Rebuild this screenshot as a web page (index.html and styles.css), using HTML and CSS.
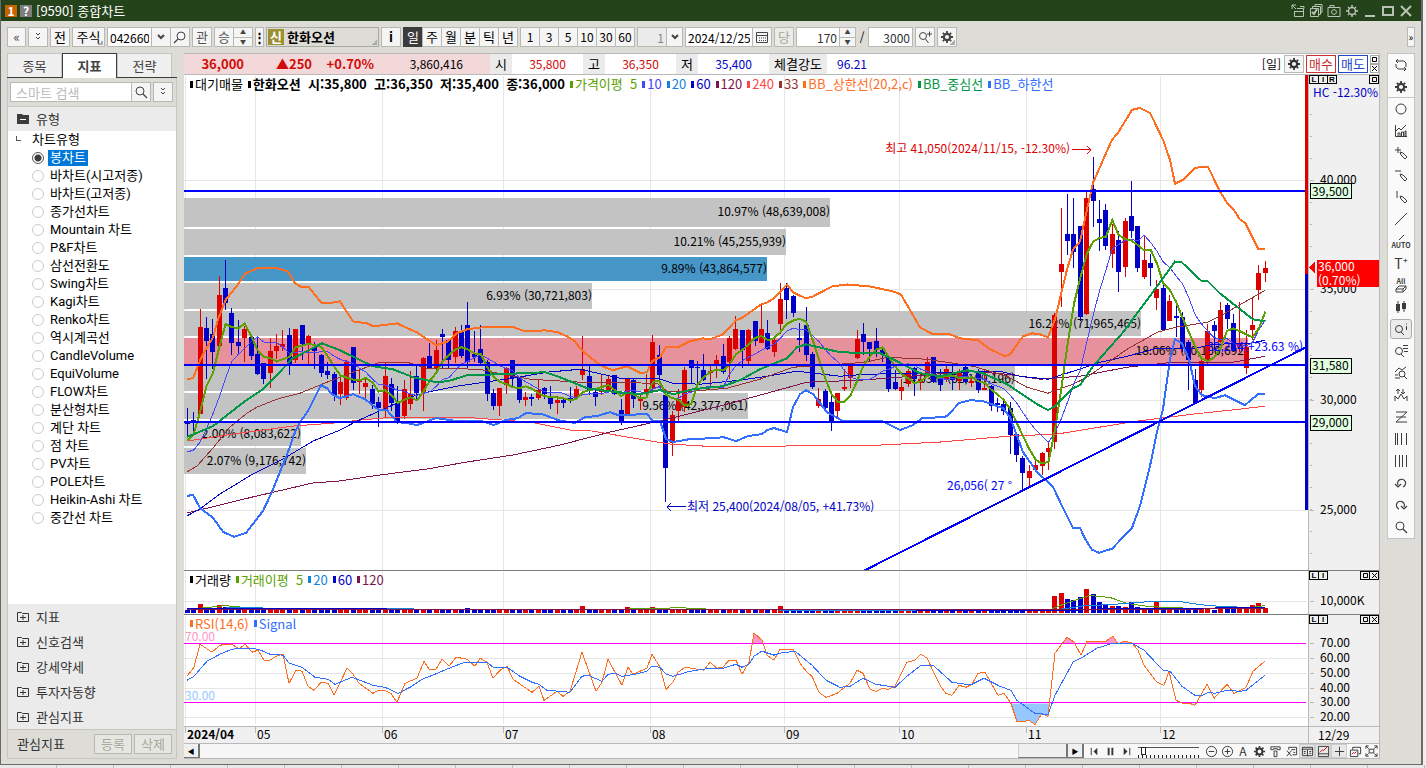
FILE: index.html
```html
<!DOCTYPE html>
<html lang="ko">
<head>
    <meta charset="UTF-8">
    <title>[9590] 종합차트</title>
    <link rel="stylesheet" href="styles.css">
</head>
<body>
<svg class="sprite">
    <symbol id="gear" viewBox="0 0 14 14"><circle cx="7" cy="7" r="3.2" fill="none" stroke="currentColor" stroke-width="2.2"/><path d="M7 1v2M7 11v2M1 7h2M11 7h2M2.8 2.8l1.4 1.4M9.8 9.8l1.4 1.4M11.2 2.8L9.8 4.2M4.2 9.8l-1.4 1.4" stroke="currentColor" stroke-width="1.8"/></symbol>
    <symbol id="find" viewBox="0 0 14 14"><circle cx="6" cy="6" r="4" fill="none" stroke="currentColor"/><path d="M9 9l4 4" stroke="currentColor" stroke-width="1.3"/></symbol>
    <symbol id="down" viewBox="0 0 14 14"><path d="M4 5l3 3 3-3" fill="none" stroke="currentColor" stroke-width="2"/></symbol>
    <symbol id="dbl" viewBox="0 0 14 14"><path d="M5 3l2 2 2-2M5 7l2 2 2-2" fill="none" stroke="currentColor"/></symbol>
    <symbol id="pen" viewBox="0 0 14 14"><path d="M6 6l1 3 4 4 2-2-4-4z" fill="none" stroke="currentColor"/></symbol>
    <symbol id="folder" viewBox="0 0 12 12"><path d="M.5 10.500v-9h4l1 1h6v8z" fill="none" stroke="currentColor"/><path d="M3 6.500h6M6 4v5" stroke="currentColor"/></symbol>
    <symbol id="max" viewBox="0 0 7 7"><path d="M1.500 1.500h4v4h-4z" fill="none" stroke="currentColor"/></symbol>
    <symbol id="close" viewBox="0 0 7 7"><path d="M1 1l5 5M6 1L1 6" stroke="currentColor"/></symbol>
</svg>
<div class="window">
    <header class="titlebar">
        <span class="badge num">1</span><span class="badge help">?</span>
        <h1>[9590] 종합차트</h1>
        <div class="win-buttons">
            <button aria-label="분리"><svg viewBox="0 0 14 14"><path d="M1 5V1h4M1 1l4 4M3.500 7v5.500h9v-8H6M4 7.500h9M9 2.500h4v2" fill="none" stroke="currentColor"/></svg></button>
            <button aria-label="선택"><svg viewBox="0 0 14 14"><path d="M1.500 4.500h8v8h-8zM3.500 4V2.500h8v8H10M6 2V.500h7v8h-1" fill="none" stroke="currentColor"/><path d="M3 8l2 2 3-5" fill="none" stroke="currentColor" stroke-width="2"/></svg></button>
            <button aria-label="캡처"><svg viewBox="0 0 14 14"><path d="M1 3.500h12v9H1zM3 3V1.500h4V3" fill="none" stroke="currentColor"/><circle cx="7" cy="8" r="2.400" fill="none" stroke="currentColor"/></svg></button>
            <button aria-label="설정"><svg viewBox="0 0 14 14"><circle cx="7" cy="7" r="3.500" fill="none" stroke="currentColor" stroke-width="1.400"/><path d="M7 1v2M7 11v2M1 7h2M11 7h2M3 3l1 1M10 10l1 1M11 3l-1 1M4 10l-1 1" stroke="currentColor" stroke-width="1.600"/></svg></button>
            <button aria-label="최소화"><svg viewBox="0 0 14 14"><path d="M2 12h10" stroke="currentColor" stroke-width="2"/></svg></button>
            <button aria-label="최대화"><svg viewBox="0 0 14 14"><path d="M2 3h10v8H2z" fill="none" stroke="currentColor" stroke-width="2"/></svg></button>
            <button aria-label="닫기"><svg viewBox="0 0 14 14"><path d="M2 2l10 10M12 2L2 12" stroke="currentColor" stroke-width="2"/></svg></button>
        </div>
    </header>

    <div class="toolbar">
        <button class="btn first">«</button>
        <button class="btn"><svg><use href="#dbl"/></svg></button>
        <button class="btn">전</button>
        <button class="btn kind">주식</button>
        <div class="group"><input class="code" aria-label="종목코드" value="042660"><button class="btn" aria-label="목록"><svg><use href="#down"/></svg></button><button class="btn" aria-label="종목검색"><svg class="flip"><use href="#find"/></svg></button></div>
        <button class="btn dim">관</button>
        <div class="group"><button class="btn dim">승</button><span class="spin"><button aria-label="위">▲</button><button aria-label="아래">▼</button></span></div>
        <button class="btn more">⋮</button>
        <div class="stock"><b class="sin">신</b><b>한화오션</b></div>
        <button class="btn"><b>i</b></button>
        <div class="group"><button class="btn on">일</button><button class="btn">주</button><button class="btn">월</button><button class="btn">분</button><button class="btn">틱</button><button class="btn">년</button></div>
        <div class="group nums"><button class="btn">1</button><button class="btn">3</button><button class="btn">5</button><button class="btn">10</button><button class="btn">30</button><button class="btn">60</button></div>
        <div class="group"><input class="unit" aria-label="주기" value="1" disabled><button class="btn chev" aria-label="주기 목록"><svg><use href="#down"/></svg></button></div>
        <div class="group"><input class="date" aria-label="기준일" value="2024/12/25"><button class="btn" aria-label="달력"><svg viewBox="0 0 14 14"><path d="M1.500 2.500h11v10h-11zM1 5.500h12" fill="none" stroke="currentColor"/><path d="M4 8h7M4 10.500h7" stroke="currentColor" stroke-dasharray="1 1"/></svg></button></div>
        <button class="btn off" disabled>당</button>
        <div class="group"><input class="bars" aria-label="봉 개수" value="170"><span class="spin"><button aria-label="증가">▲</button><button aria-label="감소">▼</button></span></div>
        <span class="slash">/</span>
        <input class="total" aria-label="전체 봉" value="3000">
        <button class="btn" aria-label="확대"><svg viewBox="0 0 14 14"><circle cx="5" cy="6" r="3.500" fill="none" stroke="currentColor"/><path d="M7.500 9l3 4M9 4h5M11.500 1.500v5" stroke="currentColor"/></svg></button>
        <button class="btn kind2" aria-label="차트 설정"><svg><use href="#gear"/></svg></button>
        <button class="btn tail">»</button>
    </div>

    <div class="body">
        <aside class="side">
            <nav class="tabs"><button>종목</button><button class="active">지표</button><button>전략</button></nav>
            <form class="search"><input type="text" aria-label="스마트 검색" placeholder="스마트 검색"><button class="btn" type="button" aria-label="검색"><svg><use href="#find"/></svg></button><button class="btn gap" type="button" aria-label="펼치기"><svg><use href="#dbl"/></svg></button></form>
            <h2><svg viewBox="0 0 12 12"><path d="M0 11V1h5l1 1h6v9z" fill="#3c3c3c"/><path d="M3 6.500h6" stroke="#fff"/></svg>유형</h2>
            <div class="tree">
                <p><i></i>차트유형</p>
                <label><input type="radio" name="kind" checked><span>봉차트</span></label>
                <label><input type="radio" name="kind"><span>바차트(시고저종)</span></label>
                <label><input type="radio" name="kind"><span>바차트(고저종)</span></label>
                <label><input type="radio" name="kind"><span>종가선차트</span></label>
                <label><input type="radio" name="kind"><span>Mountain 차트</span></label>
                <label><input type="radio" name="kind"><span>P&amp;F차트</span></label>
                <label><input type="radio" name="kind"><span>삼선전환도</span></label>
                <label><input type="radio" name="kind"><span>Swing차트</span></label>
                <label><input type="radio" name="kind"><span>Kagi차트</span></label>
                <label><input type="radio" name="kind"><span>Renko차트</span></label>
                <label><input type="radio" name="kind"><span>역시계곡선</span></label>
                <label><input type="radio" name="kind"><span>CandleVolume</span></label>
                <label><input type="radio" name="kind"><span>EquiVolume</span></label>
                <label><input type="radio" name="kind"><span>FLOW차트</span></label>
                <label><input type="radio" name="kind"><span>분산형차트</span></label>
                <label><input type="radio" name="kind"><span>계단 차트</span></label>
                <label><input type="radio" name="kind"><span>점 차트</span></label>
                <label><input type="radio" name="kind"><span>PV차트</span></label>
                <label><input type="radio" name="kind"><span>POLE차트</span></label>
                <label><input type="radio" name="kind"><span>Heikin-Ashi 차트</span></label>
                <label><input type="radio" name="kind"><span>중간선 차트</span></label>
            </div>
            <div class="folders">
                <button><svg><use href="#folder"/></svg>지표</button>
                <button><svg><use href="#folder"/></svg>신호검색</button>
                <button><svg><use href="#folder"/></svg>강세약세</button>
                <button><svg><use href="#folder"/></svg>투자자동향</button>
                <button><svg><use href="#folder"/></svg>관심지표</button>
            </div>
            <div class="side-foot"><span>관심지표</span><button disabled>등록</button><button disabled>삭제</button></div>
        </aside>

        <main class="chart">
            <div class="quote">
                <div class="now"><b class="price">36,000</b><b class="diff">▲250</b><b class="rate">+0.70%</b><span class="vol">3,860,416</span></div>
                <span class="lab">시</span><span class="val up">35,800</span>
                <span class="lab">고</span><span class="val up">36,350</span>
                <span class="lab">저</span><span class="val dn">35,400</span>
                <span class="lab wide">체결강도</span><span class="val dn power">96.21</span>
                <span class="period">[일]</span>
                <button class="set" aria-label="설정"><svg><use href="#gear"/></svg></button>
                <button class="buy">매수</button>
                <button class="sell">매도</button>
                <span class="mini"><button aria-label="확대"><svg><use href="#max"/></svg></button><button aria-label="닫기"><svg><use href="#close"/></svg></button></span>
            </div>
            <section class="pane pane-price">
                <div class="plot">
                    <svg id="price"></svg>
                    <div class="legend">
                        <span class="k">대기매물</span>
                        <b class="k">한화오션&nbsp; 시:35,800&nbsp; 고:36,350&nbsp; 저:35,400&nbsp; 종:36,000</b>
                        <span class="ma5">가격이평&nbsp; 5</span><span class="ma10">10</span><span class="ma20">20</span><span class="ma60">60</span><span class="ma120">120</span><span class="ma240">240</span><span class="ma33">33</span>
                        <span class="bbu">BB_상한선(20,2,c)</span><span class="bbm">BB_중심선</span><span class="bbl">BB_하한선</span>
                    </div>
                </div>
                <div class="axis"><svg id="priceAxis"></svg><div class="lir"><button>L</button><button>I</button><button>R</button></div><div class="box"><button aria-label="확대"><svg><use href="#max"/></svg></button></div></div>
            </section>
            <section class="pane pane-volume">
                <div class="plot">
                    <svg id="volume"></svg>
                    <div class="legend"><span class="k">거래량</span><span class="ma5">거래이평&nbsp; 5</span><span class="ma20">20</span><span class="ma60">60</span><span class="ma120">120</span></div>
                </div>
                <div class="axis"><svg id="volumeAxis"></svg><div class="lir"><button>L</button><button>I</button></div><div class="box"><button aria-label="확대"><svg><use href="#max"/></svg></button><button aria-label="닫기"><svg><use href="#close"/></svg></button></div></div>
            </section>
            <section class="pane pane-rsi">
                <div class="plot">
                    <svg id="rsi"></svg>
                    <div class="legend"><span class="bbu">RSI(14,6)</span><span class="bbl">Signal</span></div>
                </div>
                <div class="axis"><svg id="rsiAxis"></svg><div class="lir"><button>L</button><button>I</button></div><div class="box"><button aria-label="확대"><svg><use href="#max"/></svg></button><button aria-label="닫기"><svg><use href="#close"/></svg></button></div></div>
            </section>
            <div class="pane pane-date"><div class="plot"><svg id="dates"></svg></div><div class="axis">12/29</div></div>
            <div class="scroll">
                <button class="arrow">◀</button><div class="track"><div class="thumb"></div></div><button class="arrow">▶</button>
                <div class="controls">
                    <button aria-label="처음"><svg viewBox="0 0 14 14"><path d="M3.500 3v8" stroke="currentColor"/><path d="M6 7l4-4v8z" fill="currentColor"/></svg></button>
                    <button aria-label="정지"><svg viewBox="0 0 14 14"><path d="M5 3v8M9 3v8" stroke="currentColor" stroke-width="2"/></svg></button>
                    <button aria-label="끝"><svg viewBox="0 0 14 14"><path d="M10.500 3v8" stroke="currentColor"/><path d="M8 7L4 3v8z" fill="currentColor"/></svg></button>
                    <input type="range" aria-label="속도" value="5">
                    <button aria-label="축소"><svg viewBox="0 0 14 14"><circle cx="7" cy="7" r="5.500" fill="none" stroke="currentColor"/><path d="M4 7h6" stroke="currentColor"/></svg></button>
                    <button aria-label="확대"><svg viewBox="0 0 14 14"><circle cx="7" cy="7" r="5.500" fill="none" stroke="currentColor"/><path d="M4 7h6M7 4v6" stroke="currentColor"/></svg></button>
                    <button>A</button>
                    <button aria-label="설정"><svg><use href="#gear"/></svg></button>
                    <button aria-label="도구"><svg viewBox="0 0 14 14"><path d="M2 5V2h10v3H9V4H5v1zM5.500 6.500h3v6h-3z" fill="none" stroke="currentColor"/></svg></button>
                    <button aria-label="엑셀"><svg viewBox="0 0 14 14"><path d="M4 5V2.500h8.500v8H8M2 6l5 6M7 6l-5 6M7 5h4M9 8h2" fill="none" stroke="currentColor"/></svg></button>
                    <button class="press" aria-label="표"><svg viewBox="0 0 14 14"><path d="M1.500 2.500h11v9h-11zM1 4.500h12M7 5v7M3 7h2M3 9h2M9 7h2M9 9h2" fill="none" stroke="currentColor"/></svg></button>
                    <button class="press" aria-label="차트"><svg viewBox="0 0 14 14"><path d="M1.500 1.500h11v11h-11zM1 9.500h12" fill="none" stroke="currentColor"/><path d="M3 8l3-3 1 1 4-4" fill="none" stroke="#c00"/></svg></button>
                    <button class="press" aria-label="십자선"><svg viewBox="0 0 14 14"><path d="M2 7h10M7 2v10" stroke="currentColor"/></svg></button>
                    <button aria-label="복사"><svg viewBox="0 0 14 14"><path d="M4 5V2.500h8.500v7H10M1.500 5.500h8v7h-8z" fill="none" stroke="currentColor"/><path d="M3 10l2-2 1 1 2-2" fill="none" stroke="#c00"/></svg></button>
                    <button aria-label="전체화면"><svg viewBox="0 0 14 14"><path d="M4.500 4.500h5v4h-5zM1 4V1h3M10 1h3v3M13 9v3h-3M4 12H1V9M1 1l3 3M13 1l-3 3M1 12l3-3M13 12l-3-3" fill="none" stroke="currentColor"/></svg></button>
                </div>
            </div>
        </main>

        <nav class="tools">
            <button aria-label="새로고침"><svg viewBox="0 0 14 14"><path d="M4 1L2 3l2 2M2 3h8l2 2v4M10 9l2 2-2 2M12 11H4L2 9V6" fill="none" stroke="currentColor"/></svg></button>
            <button class="line" aria-label="설정"><svg><use href="#gear"/></svg></button>
            <button aria-label="원"><svg viewBox="0 0 14 14"><circle cx="7" cy="7" r="5" fill="none" stroke="currentColor"/></svg></button>
            <button aria-label="지표"><svg viewBox="0 0 14 14"><path d="M1.500 1v11.500H13M4 12V9h2v3M7.500 12V8h2v4M11 12V7h1v5M2 7l3-3 2 2 5-5" fill="none" stroke="currentColor"/></svg></button>
            <button aria-label="십자선 그리기"><svg viewBox="0 0 14 14"><use href="#pen"/><path d="M1 4h6M4 1v6" stroke="currentColor"/></svg></button>
            <button aria-label="수평선"><svg viewBox="0 0 14 14"><use href="#pen"/><path d="M1 3h6" stroke="currentColor"/></svg></button>
            <button aria-label="수직선"><svg viewBox="0 0 14 14"><use href="#pen"/><path d="M3 1v7" stroke="currentColor"/></svg></button>
            <button aria-label="추세선"><svg viewBox="0 0 14 14"><path d="M1 13L13 1" stroke="currentColor"/></svg></button>
            <button class="auto"><svg viewBox="0 0 14 6"><path d="M5 6l5-5" stroke="currentColor"/></svg>AUTO</button>
            <button class="txt">T⁺</button>
            <button class="auto">All<svg viewBox="0 0 14 8"><path d="M2 4l3-3h7l-3 3zM2 4v3h7V4M9 7l3-3V1" fill="none" stroke="currentColor"/></svg></button>
            <button aria-label="봉"><svg viewBox="0 0 14 14"><path d="M4 1v12M10 1v11" stroke="currentColor"/><path d="M2 4h4v7H2zM8 3h4v6H8z" fill="currentColor"/></svg></button>
            <button class="sel" aria-label="정보"><svg viewBox="0 0 14 14"><circle cx="5" cy="7" r="3.500" fill="none" stroke="currentColor"/><path d="M7 10l3 3M12.500 4v4M12.500 1.500v1" stroke="currentColor"/></svg></button>
            <button aria-label="목록 조회"><svg viewBox="0 0 14 14"><circle cx="5" cy="7" r="3.500" fill="none" stroke="currentColor"/><path d="M7 10l3 3M9 1.500h5M9 4.500h5M10 7.500h4" stroke="currentColor"/></svg></button>
            <button aria-label="지표 조회"><svg viewBox="0 0 14 14"><circle cx="8" cy="8" r="3" fill="none" stroke="currentColor"/><path d="M10 10l3 3M1 6l4-4 3 2 4-3M1 9h3M1 12h5" fill="none" stroke="currentColor"/></svg></button>
            <button aria-label="매매신호"><svg viewBox="0 0 14 14"><path d="M1 13V8l3 3 3-5 3 5 3-3v5M4 6V1M2 3l2-2 2 2M9 1v5M7 4l2 2 2-2" fill="none" stroke="currentColor"/></svg></button>
            <button aria-label="지그재그"><svg viewBox="0 0 14 14"><path d="M2 2h11L2 12h11M2 7h10" fill="none" stroke="currentColor"/></svg></button>
            <button aria-label="간격선"><svg viewBox="0 0 14 14"><path d="M1.500 1v12M3.500 1v12M7.500 1v12M12.500 1v12" stroke="currentColor"/></svg></button>
            <button aria-label="등간격선"><svg viewBox="0 0 14 14"><path d="M1.500 1v12M5.500 1v12M8.500 1v12M12.500 1v12" stroke="currentColor"/></svg></button>
            <button aria-label="되돌리기"><svg viewBox="0 0 14 14"><path d="M4 9a4 4 0 1 1 5 2M1 8l3 3 3-3" fill="none" stroke="currentColor" stroke-width="1.200"/></svg></button>
            <button aria-label="다시하기"><svg viewBox="0 0 14 14"><path d="M10 9a4 4 0 1 0-5 2M13 8l-3 3-3-3" fill="none" stroke="currentColor" stroke-width="1.200"/></svg></button>
            <button aria-label="돋보기"><svg><use href="#find"/></svg></button>
        </nav>
    </div>
</div>
<div class="taskbar"></div>
<script src="chart.js"></script>
</body>
</html>
```

FILE: styles.css
```css
* {
    box-sizing: border-box;
}
body {
    margin: 0;
    height: 100vh;
    display: flex;
    flex-direction: column;
    overflow: hidden;
    background: #f0f0f0;
    color: #000;
    font: 12px/14px "Noto Sans CJK KR", sans-serif;
}
button, input {
    font: inherit;
    color: inherit;
    margin: 0;
    padding: 0;
    border-radius: 0;
}
button {
    display: flex;
    align-items: center;
    justify-content: center;
    border: 0;
    background: none;
    white-space: nowrap;
}
button svg {
    width: 14px;
    height: 14px;
    flex: none;
}
.sprite {
    position: absolute;
    width: 0;
    height: 0;
}
.window {
    flex: 1;
    min-height: 0;
    margin-right: 3px;
    display: flex;
    flex-direction: column;
    background: #dddcd6;
    border: solid #6a6a6a;
    border-width: 0 2px 1px 1px;
}
.taskbar {
    height: 3px;
    background: repeating-linear-gradient(90deg, #e8e8e8 0 56px, #bbb 56px 57px);
}

/* title */
.titlebar {
    height: 21px;
    display: flex;
    align-items: center;
    padding: 0 8px 0 4px;
    background: #24431b;
    color: #fff;
}
.titlebar h1 {
    margin: 0 0 0 4px;
    font-size: 13px;
    font-weight: 400;
}
.badge {
    width: 12px;
    height: 12px;
    margin-right: 3px;
    line-height: 12px;
    text-align: center;
    font-weight: 700;
    background: #c86400;
}
.badge.help {
    margin-right: 0;
    background: #7d7d7d;
}
.win-buttons {
    display: flex;
    gap: 4px;
    margin-left: auto;
    color: #b9c3b5;
}

/* toolbar */
.toolbar {
    height: 32px;
    display: flex;
    align-items: center;
    gap: 2px;
    padding-left: 6px;
}
.group {
    display: flex;
}
.btn {
    width: 20px;
    height: 20px;
    flex: none;
    border: 1px solid #b9b9b4;
    background: #f5f5f5;
    font-size: 13px;
}
.btn svg {
    color: #444;
}
.nums .btn {
    font-size: 12px;
}
.group > * + *, .search .btn {
    margin-left: -1px;
}
.btn.first {
    width: 19px;
    color: #444;
}
.btn.kind {
    width: 33px;
}
.btn.kind, .btn.kind2, .stock {
    background-image: linear-gradient(135deg, transparent 50%, #aaa 50%);
    background-size: 5px 5px;
    background-position: right 1px bottom 1px;
    background-repeat: no-repeat;
}
.btn.dim {
    color: #555;
}
.btn.off {
    color: #aaa898;
    background: #ebebe8;
}
.btn.more {
    width: 9px;
    font-weight: 700;
}
.btn.on {
    background: #3c3c3c;
    color: #fff;
    border-color: #3c3c3c;
}
.btn.chev {
    width: 17px;
}
.btn.tail {
    width: 8px;
    margin-left: auto;
    margin-right: 6px;
    font-size: 10px;
}
.btn .flip {
    transform: scaleX(-1);
}
.toolbar input {
    height: 20px;
    border: 1px solid #b9b9b4;
    padding: 0 2px;
    background: #fff;
}
.toolbar .code {
    width: 45px;
}
.toolbar .unit {
    width: 30px;
    text-align: right;
    color: #888;
    background: #ebebeb;
}
.toolbar .date {
    width: 68px;
}
.toolbar .bars {
    width: 44px;
    text-align: right;
    color: #333;
}
.toolbar .total {
    width: 45px;
    text-align: right;
    color: #333;
}
.slash {
    width: 8px;
    text-align: center;
}
.spin {
    width: 17px;
    height: 20px;
    display: flex;
    flex-direction: column;
    border: 1px solid #b9b9b4;
    background: #f5f5f5;
}
.btn + .spin {
    width: 20px;
}
.spin button {
    flex: 1;
    font-size: 6px;
    line-height: 8px;
    color: #444;
}
.spin button + button {
    border-top: 1px solid #b9b9b4;
}
.stock {
    width: 113px;
    height: 20px;
    display: flex;
    align-items: center;
    gap: 3px;
    padding-left: 1px;
    border: 1px solid #a9a9a4;
    background-color: #dddcd6;
}
.stock b {
    font-size: 13px;
}
.stock .sin {
    width: 16px;
    height: 16px;
    line-height: 15px;
    text-align: center;
    background: #9b9032;
    color: #fff;
}

.body {
    flex: 1;
    min-height: 0;
    display: flex;
    padding: 0 6px 5px;
}

/* left panel */
.side {
    width: 170px;
    margin-right: 7px;
    display: flex;
    flex-direction: column;
    border: solid #c5c5c2;
    border-width: 0 1px 1px;
    background: #fff;
    font-size: 13px;
}
.tabs {
    height: 25px;
    flex: none;
    display: flex;
    margin: 0 -1px;
    padding-right: 5px;
    background: #dddcd6;
    border-bottom: 1px solid #3c3c3c;
}
.tabs button {
    flex: 1;
    background: #f0f0f0;
    border: 1px solid #c5c5c2;
    border-bottom: 0;
    color: #444;
}
.tabs .active {
    margin-bottom: -1px;
    background: #fff;
    border-color: #3c3c3c;
    font-weight: 700;
}
.search {
    height: 28px;
    flex: none;
    display: flex;
    align-items: center;
    padding: 0 3px 0 2px;
    background: #dddcd6;
}
.search input {
    flex: 1;
    min-width: 0;
    height: 20px;
    padding: 0 5px;
    border: 1px solid #b9b9b4;
    background: #fff;
}
.search input::placeholder {
    color: #bbb;
}
.search .btn.gap {
    margin-left: 2px;
}
.side h2 {
    height: 25px;
    flex: none;
    display: flex;
    align-items: center;
    gap: 7px;
    margin: 0;
    padding-left: 9px;
    font-size: 13px;
    font-weight: 400;
    color: #333;
    background: #ebebeb;
    border-top: 1px solid #c9c9c6;
}
.side h2 svg, .folders svg {
    width: 12px;
    height: 12px;
}
.tree {
    flex: 1;
    font: 13px/14px Roboto, "Noto Sans CJK KR", sans-serif;
}
.tree p {
    height: 18px;
    margin: 0;
    line-height: 18px;
    padding-left: 24px;
}
.tree i {
    float: left;
    width: 5px;
    height: 5px;
    margin: 5px 0 0 -16px;
    border: solid #555;
    border-width: 0 0 1px 1px;
}
.tree label {
    height: 18px;
    display: flex;
    align-items: center;
    gap: 4px;
    padding-left: 24px;
}
.tree input {
    appearance: none;
    width: 12px;
    height: 12px;
    border: 1px solid #ccc;
    border-radius: 50%;
    background: #fff;
}
.tree input:checked {
    border-color: #555;
    background: radial-gradient(circle, #3c3c3c 3px, #fff 4px);
}
.tree span {
    padding: 1px 2px;
}
.tree input:checked + span {
    background: #0078d7;
    color: #fff;
}
.folders {
    flex: none;
    background: #ebebeb;
}
.folders button {
    width: 100%;
    height: 25px;
    justify-content: flex-start;
    gap: 7px;
    padding-left: 9px;
    color: #333;
}
.side-foot {
    height: 29px;
    flex: none;
    display: flex;
    align-items: center;
    gap: 2px;
    padding: 0 4px 0 9px;
    border-top: 1px solid #c5c5c2;
    background: #dddcd6;
    color: #333;
}
.side-foot span {
    flex: 1;
}
.side-foot button {
    width: 38px;
    height: 20px;
    border: 1px solid #b9b9b4;
    background: #e6e6e2;
    color: #aaa898;
}

/* chart */
.chart {
    flex: 1;
    min-width: 0;
    display: flex;
    flex-direction: column;
    border: 1px solid #b9b9b9;
    border-width: 1px 1px 1px 0;
    background: #fff;
}
.quote {
    height: 21px;
    flex: none;
    display: flex;
    align-items: center;
    border-bottom: 1px solid #b9b9b9;
    line-height: 20px;
}
.now {
    width: 306px;
    display: flex;
    background: #f2d8d8;
    color: #d20a0a;
    font-size: 13px;
}
.now .price {
    width: 60px;
    text-align: right;
}
.now .diff {
    width: 68px;
    text-align: right;
}
.now .rate {
    width: 62px;
    text-align: right;
}
.now .vol {
    width: 89px;
    text-align: right;
    color: #000;
    font-size: 12px;
}
.lab {
    width: 22px;
    text-align: center;
    font-size: 13px;
    background: #ebebeb;
}
.lab.wide {
    width: 58px;
}
.val {
    width: 71px;
    text-align: center;
}
.val.power {
    width: 50px;
}
.up {
    color: #d20a0a;
}
.dn {
    color: #0000c8;
}
.period {
    margin-left: auto;
    margin-right: 3px;
}
.quote button {
    width: 30px;
    height: 18px;
    margin-right: 2px;
    border: 1px solid;
    font-size: 13px;
}
.quote .set {
    width: 20px;
    border-color: #b9b9b4;
    background: #f5f5f5;
}
.quote .set svg {
    color: #333;
}
.quote .buy {
    color: #c83232;
}
.quote .sell {
    color: #1e46c8;
}
.mini {
    width: 9px;
}
.quote .mini button {
    width: 9px;
    height: 9px;
    margin: 0;
    border-color: #aaa;
}
.mini svg, .box button svg {
    width: 7px;
    height: 7px;
}
.pane {
    display: flex;
    min-height: 0;
    border-bottom: 1px solid #7d7d7d;
}
.pane-price {
    flex: 497;
}
.pane-volume {
    flex: 43;
}
.pane-rsi {
    flex: 112;
    border-color: #b9b9b9;
}
.pane-date {
    height: 17px;
    flex: none;
    border-color: #b9b9b9;
    background: #f0f0f0;
}
.pane-date .axis {
    padding-left: 9px;
    line-height: 16px;
}
.plot {
    flex: 1;
    min-width: 0;
    position: relative;
}
.plot > svg, .axis > svg {
    display: block;
    width: 100%;
    height: 100%;
    overflow: hidden;
    shape-rendering: crispEdges;
    font-size: 12px;
}
.pane-date .plot > svg {
    overflow: visible;
}
.axis {
    width: 71px;
    flex: none;
    position: relative;
    border-left: 1px solid #b9b9b9;
    background: #f0f0f0;
}
.lir, .box {
    position: absolute;
    top: 0;
    left: 0;
    display: flex;
}
.box {
    left: auto;
    right: 0;
}
.lir button, .box button {
    width: 10px;
    height: 9px;
    border: 1px solid #000;
    font: 700 8px/7px "Liberation Sans", sans-serif;
    margin-right: -1px;
}
.box button {
    margin: 0 0 0 -1px;
}
.legend {
    position: absolute;
    top: 2px;
    left: 6px;
    display: flex;
    gap: 5px;
    font-size: 13px;
    white-space: nowrap;
}
.legend > * {
    display: flex;
    align-items: center;
    gap: 2px;
}
.legend > ::before {
    content: "";
    width: 3px;
    height: 7px;
    background: currentColor;
}
.ma5 { color: #5aa000; }
.ma10 { color: #4646ff; }
.ma20 { color: #1482dc; }
.ma60 { color: #0000c8; }
.ma120 { color: #7d1450; }
.ma240 { color: #ff4646; }
.ma33 { color: #963232; }
.bbu { color: #ff6e1e; }
.bbm { color: #009646; }
.bbl { color: #326eff; }

/* scrollbar and play controls */
.scroll {
    height: 14px;
    flex: none;
    display: flex;
    background: #f8f8f8;
}
.arrow, .thumb {
    width: 16px;
    border: solid #777;
    border-width: 0 2px 1px 0;
    background: #f0f0f0;
    font-size: 7px;
}
.track {
    flex: 1;
    display: flex;
    justify-content: flex-end;
    background: #f7f7f7;
}
.thumb {
    width: 50px;
    border-left: 1px solid #ccc;
}
.controls {
    width: 295px;
    display: flex;
    align-items: center;
    padding-left: 2px;
    color: #333;
}
.controls button {
    width: 16px;
    height: 14px;
    flex: none;
}
.controls button svg {
    width: 13px;
    height: 13px;
}
.controls .press {
    background: #e8e8e8;
    border: 1px solid #ccc;
}
.controls input {
    appearance: none;
    flex: 1;
    min-width: 0;
    height: 13px;
    margin: 0 4px;
    background: linear-gradient(#555, #555) 0 2px / 100% 1px no-repeat, repeating-linear-gradient(90deg, #222 0 1px, transparent 1px 4px) 0 100% / 100% 3px no-repeat;
}
.controls input::-webkit-slider-thumb {
    appearance: none;
    width: 5px;
    height: 8px;
    border: 1px solid #222;
    background: #fff;
}

/* drawing tools */
.tools {
    width: 28px;
    align-self: flex-start;
    margin-left: 7px;
    border: 1px solid #c5c5c2;
    background: #fafafa;
    color: #3c3c3c;
}
.tools button {
    width: 26px;
    height: 22px;
}
.tools .line {
    border-bottom: 1px solid #c5c5c2;
}
.tools .sel {
    width: 22px;
    height: 20px;
    margin: 1px 2px;
    border: 1px solid #aaa;
    border-radius: 3px;
    background: #ebebeb;
}
.tools .auto {
    flex-direction: column;
    font-size: 7px;
    line-height: 8px;
    font-weight: 700;
}
.tools .auto svg {
    height: 8px;
}
.tools .txt {
    font-size: 14px;
}
```

FILE: chart.js
```js
var NS = "http://www.w3.org/2000/svg";
var LEFT = 184, WIDTH = 1124, FIRST = 187.3, STEP = 6.379;

// colour, high, body top, body bottom, low
var candles = ("b409,424,425,438 b413,421,423,437 r310,328,415,415 b318,329,342,380 b320,335,353,370 r277,296,347,348 b260,289,304,311 b309,314,344,356 b321,343,347,356 r327,330,339,363 " +
    "b338,338,357,361 b339,355,375,376 b364,364,380,385 r339,352,374,389 r335,347,352,360 r331,345,348,352 b329,336,365,376 r330,330,361,364 b326,326,345,361 r336,337,345,365 " +
    "b343,348,352,370 b355,356,374,378 b363,372,376,380 b373,375,396,402 r379,383,395,406 r361,363,399,401 b348,348,384,391 r370,380,383,395 r380,384,388,399 b386,390,405,410 " +
    "b398,403,409,428 r363,377,412,419 b379,385,404,412 b387,404,424,425 r381,390,417,420 r372,395,405,411 b367,377,394,400 r358,359,393,412 b344,357,370,370 r341,351,370,371 " +
    "b330,335,338,369 b340,341,361,370 r328,332,358,364 b326,332,357,359 b303,326,363,370 b332,355,358,363 b326,350,364,365 b361,363,395,402 b390,394,407,411 r389,389,407,417 " +
    "r368,369,386,395 b361,361,379,389 b378,379,401,404 r393,398,401,407 b395,398,400,407 r381,391,399,401 b388,389,395,400 b387,399,405,410 r397,401,404,415 b399,401,404,409 " +
    "b388,399,400,404 r387,390,398,399 r337,370,376,381 b365,377,391,396 b390,393,398,407 r375,390,393,396 r377,380,391,393 b376,376,395,396 b400,411,422,426 r379,380,415,416 " +
    "b380,381,400,409 r394,399,402,411 r375,390,394,398 r336,343,389,393 b346,356,376,380 b396,396,469,503 r412,416,444,457 r390,400,412,422 r368,371,408,413 b361,361,369,385 " +
    "b362,368,369,386 b355,371,381,382 r366,372,374,389 r356,361,367,379 b345,357,373,375 r337,339,363,380 r317,330,350,351 b331,331,351,369 r330,331,362,365 b322,322,342,347 " +
    "r304,330,344,344 b321,334,350,351 r337,341,353,358 r284,300,325,335 b284,289,301,320 b296,297,314,318 b324,339,341,353 b308,326,356,362 b353,355,388,390 r389,400,407,409 " +
    "b390,392,409,410 b396,403,422,432 r394,394,412,420 r370,388,390,392 r364,366,379,389 r331,340,359,360 b324,335,343,356 b343,343,350,363 b329,342,351,358 b347,351,356,363 " +
    "b359,359,390,393 b371,383,390,391 r380,388,392,401 r370,372,385,388 b368,369,380,397 r375,380,384,391 r358,363,376,377 b358,358,383,384 b370,380,386,392 r367,370,380,383 " +
    "b367,377,381,391 r370,374,382,391 b367,368,383,384 r377,382,384,388 b370,374,391,394 r370,389,391,391 b386,387,407,412 b399,404,406,413 b400,405,412,416 b403,409,436,455 " +
    "b435,435,456,463 b457,459,474,490 r466,472,479,488 r460,466,471,473 r453,454,467,476 r444,449,453,471 r314,316,443,450 r208,264,273,308 b194,234,241,255 b198,234,252,269 " +
    "b226,226,318,322 r191,198,315,316 b157,189,201,227 b200,219,223,251 b204,210,246,250 r224,234,254,268 b231,240,273,293 r218,221,267,278 b181,216,231,238 b226,226,269,273 " +
    "r235,260,278,280 b254,263,269,287 r281,290,299,311 b286,289,331,331 r296,302,322,322 b303,317,319,338 b313,318,350,353 b341,343,361,391 b370,381,404,405 r361,362,391,398 " +
    "r325,332,362,367 b322,326,332,351 r303,311,343,344 b304,306,320,330 b315,324,351,352 r303,345,348,353 r331,348,369,375 r298,326,331,341 r265,274,291,301 r261,268,274,283").split(" ").map(function (s) {
    return [s[0]].concat(s.slice(1).split(",").map(Number));
});

var lines = {
    upper: "187,380 193,379 201,359 207,348 213,338 218,320 226,300 238,285 245,274 257,269 263,268 278,269 288,272 295,284 302,288 309,288 321,303 327,304 340,302 353,322 367,324 373,327 397,324 410,330 417,333 436,346 448,342 457,334 467,330 482,328 514,328 525,332 545,331 558,333 567,337 575,342 580,349 590,358 602,367 613,371 627,367 641,374 647,373 652,362 660,358 666,348 678,348 690,342 703,339 710,340 723,335 736,321 743,318 761,305 767,303 774,299 787,285 793,293 806,299 813,297 832,287 847,285 870,287 893,292 901,295 920,328 933,335 950,335 960,339 978,341 990,350 1005,357 1010,355 1023,337 1032,334 1040,335 1048,338 1055,320 1067,270 1073,250 1080,242 1087,210 1093,183 1112,140 1118,133 1132,110 1140,108 1150,113 1163,140 1170,160 1175,184 1183,180 1195,168 1208,167 1220,192 1227,203 1233,209 1240,220 1245,223 1258,249 1265,249",
    lower: "187,497 193,496 200,509 213,519 223,533 234,538 246,534 257,520 263,512 272,493 280,473 288,453 295,433 300,423 308,412 321,386 327,389 332,395 340,399 353,395 365,400 379,411 387,411 397,423 407,424 417,426 436,419 457,422 482,422 494,426 505,421 518,419 526,414 542,415 558,421 575,424 585,418 597,417 610,413 618,416 647,415 653,422 660,422 666,440 673,443 690,440 717,439 723,438 736,442 748,437 762,435 767,431 774,429 787,433 793,408 800,395 806,391 813,395 827,413 843,422 882,422 900,431 913,426 922,419 943,418 947,417 959,404 970,401 983,402 1003,409 1010,418 1023,453 1037,473 1053,488 1062,507 1073,529 1080,529 1085,540 1092,551 1099,554 1112,550 1132,529 1140,507 1150,467 1157,433 1163,410 1170,360 1175,340 1182,344 1189,360 1195,387 1202,396 1215,399 1225,396 1233,400 1245,406 1258,395 1265,395",
    middle: "187,438 213,427 245,402 263,390 293,359 322,344 340,351 373,367 393,370 413,378 436,383 448,382 467,376 500,375 545,373 560,378 587,389 607,392 640,395 660,391 673,395 693,390 723,387 740,381 760,370 787,359 797,348 806,345 840,353 880,354 893,360 920,374 940,377 967,371 983,374 1007,385 1037,405 1048,411 1055,407 1073,389 1080,386 1093,367 1123,333 1157,287 1175,262 1182,263 1202,282 1208,282 1220,294 1253,320 1265,322",
    ma60: "187,517 200,510 220,495 253,475 283,460 313,442 340,431 357,422 410,398 427,393 457,387 513,379 547,373 580,370 620,379 657,379 673,384 700,385 740,381 767,377 797,372 840,377 867,375 920,374 960,373 1000,372 1020,377 1048,380 1073,372 1100,363 1127,357 1157,349 1195,349 1213,345 1250,344 1265,341",
    ma120: "187,514 200,511 253,498 313,484 340,482 380,476 427,470 467,463 513,456 560,446 610,433 650,424 680,417 727,405 767,394 807,383 860,381 900,378 970,372 1007,375 1040,380 1080,377 1127,368 1173,363 1233,363 1265,357",
    ma240: "187,442 240,434 293,427 333,424 360,421 393,418 463,418 530,423 550,427 570,431 593,432 633,439 670,445 703,447 783,447 880,446 940,443 1010,437 1057,435 1100,428 1137,422 1193,415 1240,410 1265,407",
    ma33: "187,473 197,467 213,449 230,428 247,414 257,408 277,400 300,394 327,383 353,373 380,363 407,363 427,369 480,370 493,373 530,380 580,383 657,384 667,392 693,392 727,389 760,380 793,368 853,364 870,362 887,358 927,360 973,367 1007,377 1027,388 1048,394 1073,385 1087,378 1127,350 1157,333 1175,328 1207,323 1223,315 1265,291"
};
var rsi = "187,676 194,667 200,644 212,652 220,645 232,644 239,649 245,644 252,652 258,650 264,660 270,660 276,656 283,654 289,683 296,670 302,671 308,686 314,690 321,682 328,683 334,695 347,668 353,674 359,683 373,693 378,690 385,690 391,693 397,702 405,683 412,680 417,678 424,661 429,669 436,669 442,659 449,666 456,657 467,659 475,666 480,658 487,662 493,678 500,670 507,666 513,679 532,692 539,686 544,700 557,691 563,696 570,691 582,652 596,691 602,682 608,659 622,685 628,667 633,674 647,668 652,654 660,667 666,689 673,682 678,672 685,667 704,670 710,662 717,668 723,667 729,660 736,660 742,674 749,662 754,633 762,640 767,655 774,660 780,649 793,649 800,663 807,672 812,676 819,692 826,697 837,693 850,683 857,670 863,673 870,689 876,691 882,688 888,689 895,686 907,662 915,660 921,654 927,658 940,685 946,693 952,695 959,685 966,687 972,684 978,673 985,672 998,695 1004,693 1011,703 1017,721 1023,721 1029,720 1035,724 1042,713 1048,716 1055,653 1067,637 1074,642 1081,655 1087,641 1106,641 1113,636 1118,644 1124,641 1132,643 1138,650 1144,665 1157,682 1164,685 1169,671 1176,700 1183,703 1190,703 1195,705 1207,684 1214,698 1227,684 1234,693 1239,691 1246,687 1253,671 1265,661";
var signal = "187,680 194,676 207,661 220,654 232,649 245,648 258,649 270,654 283,655 289,663 302,667 315,677 328,679 335,684 352,677 360,680 373,685 385,687 398,693 410,687 422,679 435,674 449,668 465,662 480,662 487,662 493,667 507,667 520,676 532,682 539,684 547,690 560,691 570,692 582,676 588,675 602,681 608,674 615,673 622,676 635,674 647,671 652,666 660,667 666,674 673,676 690,671 710,668 723,668 736,664 742,667 749,664 754,656 762,651 774,655 780,653 795,651 812,665 826,680 840,687 850,686 863,678 876,684 895,687 907,676 921,665 933,665 952,682 966,684 972,684 984,678 1000,686 1011,690 1017,700 1035,713 1048,714 1055,695 1073,662 1081,658 1097,648 1113,643 1132,643 1144,650 1163,670 1170,671 1182,686 1195,695 1202,695 1208,692 1215,693 1227,690 1240,691 1246,690 1265,675";
var months = [[185, "2024/04"], [255, "05"], [382, "06"], [503, "07"], [650, "08"], [784, "09"], [899, "10"], [1026, "11"], [1160, "12"]];

// volume bar tops that stand above the usual level
var tall = {2: 604, 3: 607, 5: 605, 6: 607, 7: 608, 44: 608, 62: 606, 69: 607, 73: 607, 93: 606,
    136: 597, 137: 594, 138: 599, 139: 600, 140: 598, 141: 590, 142: 595, 143: 602, 144: 605, 145: 606, 146: 606,
    147: 607, 148: 602, 149: 607, 150: 608, 151: 608, 152: 602, 153: 607, 161: 610, 167: 605, 168: 603, 169: 608};

function pen(id, x0, y0, w, h) {
    var svg = document.getElementById(id);
    var box = svg.getBoundingClientRect();
    var sx = w ? box.width / w : 1, sy = box.height / h;
    svg.innerHTML = "";
    function X(x) { return (x - x0) * sx; }
    function Y(y) { return (y - y0) * sy; }
    function add(tag, attrs) {
        var el = document.createElementNS(NS, tag);
        for (var k in attrs) el.setAttribute(k, attrs[k]);
        svg.appendChild(el);
        return el;
    }
    function pts(s) {
        return s.split(" ").map(function (p) {
            var a = p.split(",");
            return X(+a[0]) + "," + Y(+a[1]);
        }).join(" ");
    }
    return {
        rect: function (x, y, x2, y2, fill, stroke) {
            add("rect", {x: X(x), y: Y(y), width: X(x2) - X(x), height: Math.max(1, Y(y2) - Y(y)), fill: fill, stroke: stroke || "none"});
        },
        bar: function (x, y, y2, w, fill) {
            add("rect", {x: Math.round(X(x) - w / 2), y: Y(y), width: w, height: Math.max(1, Y(y2) - Y(y)), fill: fill});
        },
        line: function (s, color, w) {
            add("polyline", {points: pts(s), fill: "none", stroke: color, "stroke-width": w || 1});
        },
        area: function (s, color, clip) {
            add("polygon", {points: pts(s), fill: color, "clip-path": clip || "none"});
        },
        text: function (x, y, s, color, anchor, weight) {
            add("text", {x: X(x), y: Y(y), fill: color || "#000", "text-anchor": anchor || "start", "font-weight": weight || 400}).textContent = s;
        },
        clip: function (id, y, y2) {
            var c = add("clipPath", {id: id});
            c.appendChild(add("rect", {x: 0, y: Y(y), width: box.width, height: Y(y2) - Y(y)}));
        }
    };
}

function average(n, start) {
    var close = candles.map(function (c) { return c[0] == "r" ? c[2] : c[3]; });
    return close.map(function (v, i) {
        var y = start[i];
        if (i >= n - 1) {
            y = close.slice(i - n + 1, i + 1).reduce(function (a, b) { return a + b; }) / n;
        }
        return (FIRST + i * STEP) + "," + y;
    }).join(" ");
}

function grid(p, top, bottom, rows) {
    months.forEach(function (m) { p.rect(m[0], top, m[0] + 1, bottom, "#e6e6e6"); });
    rows.forEach(function (y) { p.rect(184, y, 1307, y + 1, "#e6e6e6"); });
}

function drawPrice() {
    var p = pen("price", LEFT, 75, WIDTH, 496);
    grid(p, 76, 571, [180, 290, 401, 511]);
    var profile = [[198, 227, 830], [229, 255, 786], [257, 282, 767], [284, 310, 592], [312, 337, 1141], [339, 365, 1248], [367, 392, 1015], [394, 420, 748], [422, 447, 301], [449, 475, 306]];
    var labels = ["10.97% (48,639,008)", "10.21% (45,255,939)", "9.89% (43,864,577)", "6.93% (30,721,803)", "16.22% (71,965,465)", "18.06% (80,100,692)", "14.03% (62,189,196)", "9.56% (42,377,061)", "2.00% (8,083,622)", "2.07% (9,176,742)"];
    profile.forEach(function (b, i) {
        p.rect(184, b[0], b[2], b[1], i == 2 ? "#4696c8" : i == 5 ? "#e6919b" : "#c3c3c3");
        p.text(b[2], (b[0] + b[1]) / 2 + 4, labels[i], "#000", "end");
    });
    candles.forEach(function (c, i) {
        var x = FIRST + i * STEP, color = c[0] == "r" ? "#dc0000" : "#0000c8";
        p.bar(x, c[1], c[4], 1, color);
        p.bar(x, c[2], c[3], 5, color);
    });
    p.line(lines.ma240, "#ff4646");
    p.line(lines.ma120, "#7d1450");
    p.line(lines.ma60, "#0000c8");
    p.line(lines.ma33, "#963232");
    p.line(average(10, [453, 451, 443, 430, 415, 398, 379, 362, 355]), "#4646ff");
    p.line(average(5, [442, 435, 413, 387]), "#5aa000", 2);
    p.line(lines.middle, "#009646", 2);
    p.line(lines.lower, "#326eff", 2);
    p.line(lines.upper, "#ff6e1e", 2);
    [190, 365, 422].forEach(function (y) { p.rect(184, y, 1306, y + 2, "#0000ff"); });
    p.line("864,572 1308,347", "#0000ff", 2);
    p.text(1070, 153, "최고 41,050(2024/11/15,  -12.30%)", "#dc0000", "end");
    p.line("1072,150 1091,150", "#dc0000");
    p.line("1087,146 1091,150 1087,154", "#dc0000");
    p.text(687, 512, "최저 25,400(2024/08/05,  +41.73%)", "#0000c8");
    p.line("686,508 667,508", "#0000c8");
    p.line("671,504 667,508 671,512", "#0000c8");
    p.text(947, 491, "26,056( 27 °", "#0000ff");
    p.text(1303, 352, "32,214(+23.63 %)", "#0000ff", "end");
    p.rect(1305, 75, 1308, 275, "#dc0000");
    p.rect(1305, 275, 1308, 511, "#0000c8");

    var a = pen("priceAxis", 1308, 75, 0, 496);
    for (var i = 0; i < 21; i++) a.rect(1309, 114 + i * 22, 1311, 115 + i * 22, "#b9b9b9");
    a.text(1312, 97, "HC -12.30%", "#0000c8");
    [[40, 184], [35, 294], [30, 405], [25, 515]].forEach(function (t) {
        a.text(1319, t[1], t[0] + ",000");
        a.rect(1309, t[1] - 4, 1313, t[1] - 3, "#b9b9b9");
    });
    [[191, "39,500"], [366, "31,580"], [423, "29,000"]].forEach(function (t) {
        a.rect(1309, t[0] - 7, 1350, t[0] + 8, "#e1ffe1", "#000");
        a.text(1311, t[0] + 5, t[1]);
    });
    a.rect(1316, 260, 1378, 288, "#ff0000");
    a.area("1308,268 1314,262 1314,274", "#ff0000");
    a.text(1317, 272, "36,000", "#fff");
    a.text(1317, 286, "(0.70%)", "#fff");
}

function drawVolume() {
    var p = pen("volume", LEFT, 572, WIDTH, 42);
    grid(p, 573, 614, [601]);
    candles.forEach(function (c, i) {
        var top = tall[i] || (i > 136 ? 608 : 610);
        p.bar(FIRST + i * STEP, top, 613, 5, c[0] == "r" ? "#dc0000" : "#0000c8");
    });
    p.line("187,610 205,608 225,606 247,608 300,610 582,610 650,609 680,608 720,610 1050,610 1065,604 1090,596 1110,598 1128,604 1150,607 1200,609 1240,609 1265,606", "#5aa000");
    p.line("187,609 245,608 300,609 1050,611 1085,606 1110,605 1150,602 1180,602 1200,605 1223,607 1265,608", "#1482dc");
    p.line("187,609 860,610 1060,611 1110,609 1265,608", "#0000c8");
    p.line("187,610 1060,610 1265,609", "#7d1450");
    var a = pen("volumeAxis", 1308, 572, 0, 42);
    a.rect(1309, 601, 1313, 602, "#b9b9b9");
    a.text(1319, 605, "10,000K");
}

function drawRsi() {
    var p = pen("rsi", LEFT, 615, WIDTH, 111);
    grid(p, 616, 724, [658, 673, 688, 717]);
    p.clip("over", 615, 643);
    p.clip("under", 703, 726);
    p.area("187,643 " + rsi + " 1265,643", "#ff96c8", "url(#over)");
    p.area("187,703 " + rsi + " 1265,703", "#96c8ff", "url(#under)");
    p.rect(184, 643, 1306, 644, "#ff00ff");
    p.rect(184, 702, 1306, 703, "#ff00ff");
    p.line(rsi, "#ff6e1e");
    p.line(signal, "#326eff");
    p.text(185, 641, "70.00", "#ff96c8");
    p.text(185, 700, "30.00", "#96c8ff");
    var a = pen("rsiAxis", 1308, 615, 0, 111);
    [[70, 643], [60, 658], [50, 673], [40, 688], [30, 702], [20, 717]].forEach(function (t) {
        a.rect(1309, t[1], 1313, t[1] + 1, "#b9b9b9");
        a.text(1319, t[1] + 4, t[0] + ".00");
    });
}

function drawDates() {
    var p = pen("dates", LEFT, 727, WIDTH, 16);
    months.forEach(function (m, i) {
        p.rect(m[0], 727, m[0] + 1, 733, "#b9b9b9");
        p.text(m[0] + 2, 739, m[1], "#000", "start", i ? 400 : 700);
    });
}

function draw() {
    drawPrice();
    drawVolume();
    drawRsi();
    drawDates();
}
draw();
window.addEventListener("resize", draw);
```
